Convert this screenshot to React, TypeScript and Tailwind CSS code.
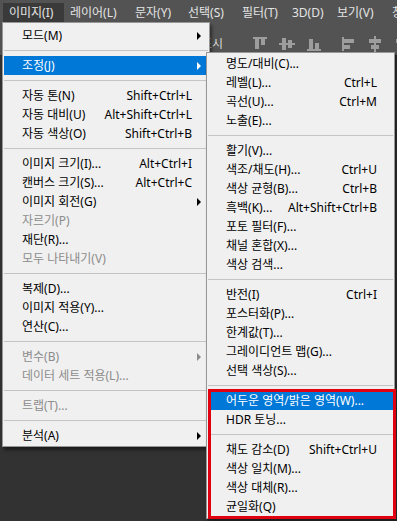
import type { ReactNode } from 'react';

type Item =
  | 'sep'
  | {
      label: string;
      shortcut?: string;
      sub?: boolean;
      disabled?: boolean;
      active?: boolean;
    };

const mainItems: Item[] = [
  { label: '모드(M)', sub: true },
  'sep',
  { label: '조정(J)', sub: true, active: true },
  'sep',
  { label: '자동 톤(N)', shortcut: 'Shift+Ctrl+L' },
  { label: '자동 대비(U)', shortcut: 'Alt+Shift+Ctrl+L' },
  { label: '자동 색상(O)', shortcut: 'Shift+Ctrl+B' },
  'sep',
  { label: '이미지 크기(I)...', shortcut: 'Alt+Ctrl+I' },
  { label: '캔버스 크기(S)...', shortcut: 'Alt+Ctrl+C' },
  { label: '이미지 회전(G)', sub: true },
  { label: '자르기(P)', disabled: true },
  { label: '재단(R)...' },
  { label: '모두 나타내기(V)', disabled: true },
  'sep',
  { label: '복제(D)...' },
  { label: '이미지 적용(Y)...' },
  { label: '연산(C)...' },
  'sep',
  { label: '변수(B)', sub: true, disabled: true },
  { label: '데이터 세트 적용(L)...', disabled: true },
  'sep',
  { label: '트랩(T)...', disabled: true },
  'sep',
  { label: '분석(A)', sub: true },
];

const subItems: Item[] = [
  { label: '명도/대비(C)...' },
  { label: '레벨(L)...', shortcut: 'Ctrl+L' },
  { label: '곡선(U)...', shortcut: 'Ctrl+M' },
  { label: '노출(E)...' },
  'sep',
  { label: '활기(V)...' },
  { label: '색조/채도(H)...', shortcut: 'Ctrl+U' },
  { label: '색상 균형(B)...', shortcut: 'Ctrl+B' },
  { label: '흑백(K)...', shortcut: 'Alt+Shift+Ctrl+B' },
  { label: '포토 필터(F)...' },
  { label: '채널 혼합(X)...' },
  { label: '색상 검색...' },
  'sep',
  { label: '반전(I)', shortcut: 'Ctrl+I' },
  { label: '포스터화(P)...' },
  { label: '한계값(T)...' },
  { label: '그레이디언트 맵(G)...' },
  { label: '선택 색상(S)...' },
  'sep',
  { label: '어두운 영역/밝은 영역(W)...', active: true },
  { label: 'HDR 토닝...' },
  'sep',
  { label: '채도 감소(D)', shortcut: 'Shift+Ctrl+U' },
  { label: '색상 일치(M)...' },
  { label: '색상 대체(R)...' },
  { label: '균일화(Q)' },
];

const menuBar = [
  { label: '이미지(I)', w: 'w-[61px]' },
  { label: '레이어(L)', w: 'w-[65px]' },
  { label: '문자(Y)', w: 'w-[53px]' },
  { label: '선택(S)', w: 'w-[54px]' },
  { label: '필터(T)', w: 'w-[50px]' },
  { label: '3D(D)', w: 'w-[45px]' },
  { label: '보기(V)', w: 'w-[55px]' },
  { label: '창', w: 'w-[11px]' },
];

function MenuList({ items }: { items: Item[] }) {
  return (
    <>
      {items.map((it, i) => {
        if (it === 'sep') {
          return (
            <div key={i} className="py-[5px] mx-[1px]">
              <div className="h-px bg-[#c4c4c4]" />
            </div>
          );
        }
        const color = it.active ? 'text-white' : it.disabled ? 'text-[#8c8c8c]' : 'text-black';
        return (
          <div
            key={i}
            className={`relative mx-[1px] h-[19px] flex items-center pl-[18px] pr-[16px] whitespace-nowrap ${color} ${it.active ? 'bg-[#0078d7]' : ''}`}
          >
            <span>{it.label}</span>
            {it.shortcut && <span className="ml-auto">{it.shortcut}</span>}
            {it.sub && (
              <span
                className={`absolute right-[7px] top-[6px] w-0 h-0 border-y-[4px] border-y-transparent border-l-[4px] ${it.active ? 'border-l-white' : it.disabled ? 'border-l-[#8c8c8c]' : 'border-l-black'}`}
              />
            )}
          </div>
        );
      })}
    </>
  );
}

function Icon({ children }: { children: ReactNode }) {
  return (
    <svg width="16" height="16" viewBox="0 0 16 16" fill="#9d9d9d">
      {children}
    </svg>
  );
}

export default function App() {
  return (
    <div
      className="relative w-[397px] h-[521px] overflow-hidden bg-[#323232] text-[12px]"
      style={{ fontFamily: '"Noto Sans", "Noto Sans CJK KR", sans-serif' }}
    >
      {/* menu bar */}
      <div className="h-[22px] bg-[#535353] flex items-stretch pl-[3px] pt-[3px] text-[#e4e4e4] whitespace-nowrap overflow-hidden">
        {menuBar.map((m, i) => (
          <div
            key={m.label}
            className={`${m.w} shrink-0 pl-[6px] flex items-center ${i === 0 ? 'bg-[#3a3a3a]' : ''}`}
          >
            {m.label}
          </div>
        ))}
      </div>

      {/* options bar */}
      <div className="h-[34px] bg-[#535353] border-b border-[#2b2b2b] flex items-center pt-[10px] pl-[201px] gap-[14px] text-[#d6d6d6]">
        <span className="whitespace-nowrap">표시</span>
        <div className="w-px h-[18px] bg-[#3c3c3c]" />
        <div className="flex items-center gap-[11px] ml-[1px]">
          <Icon>
            <rect x="1" y="1" width="14" height="2" />
            <rect x="3" y="3" width="4" height="10" />
            <rect x="9" y="3" width="4" height="6" />
          </Icon>
          <Icon>
            <rect x="0" y="7" width="16" height="2" />
            <rect x="3" y="2" width="4" height="12" />
            <rect x="9" y="4" width="4" height="8" />
          </Icon>
          <Icon>
            <rect x="1" y="13" width="14" height="2" />
            <rect x="3" y="3" width="4" height="10" />
            <rect x="9" y="7" width="4" height="6" />
          </Icon>
        </div>
        <div className="flex items-center gap-[10px] ml-[5px]">
          <Icon>
            <rect x="1" y="1" width="2" height="14" />
            <rect x="3" y="3" width="10" height="4" />
            <rect x="3" y="9" width="6" height="4" />
          </Icon>
          <Icon>
            <rect x="7" y="0" width="2" height="16" />
            <rect x="2" y="3" width="12" height="4" />
            <rect x="4" y="9" width="8" height="4" />
          </Icon>
          <Icon>
            <rect x="13" y="1" width="2" height="14" />
            <rect x="3" y="3" width="10" height="4" />
            <rect x="7" y="9" width="6" height="4" />
          </Icon>
        </div>
      </div>

      {/* image menu */}
      <div className="absolute left-[2px] top-[22px] w-[208px] bg-[#f0f0f0] border border-[#979797] pt-[3px] pb-[1px] shadow-[2px_3px_3px_rgba(0,0,0,0.45)]">
        <MenuList items={mainItems} />
      </div>

      {/* adjustments submenu */}
      <div className="absolute left-[206px] top-[52px] w-[189px] bg-[#f0f0f0] border border-[#979797] pt-[1px] pb-[2px] shadow-[2px_3px_3px_rgba(0,0,0,0.45)]">
        <MenuList items={subItems} />
      </div>

      {/* red highlight frame */}
      <div className="absolute left-[208px] top-[389px] w-[188px] h-[130px] border-[3px] border-[#e0000f]" />
    </div>
  );
}
